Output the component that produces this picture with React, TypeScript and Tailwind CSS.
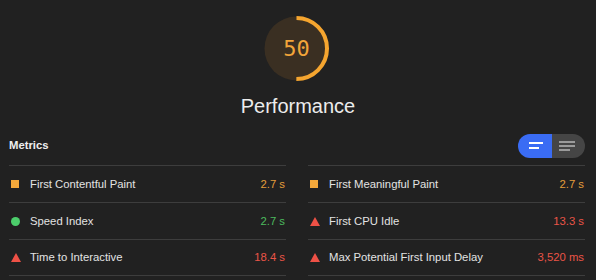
import { ReactNode } from "react"

type Tone = "average" | "pass" | "fail"

interface Metric {
  label: string
  value: string
  tone: Tone
}

const left: Metric[] = [
  { label: "First Contentful Paint", value: "2.7 s", tone: "average" },
  { label: "Speed Index", value: "2.7 s", tone: "pass" },
  { label: "Time to Interactive", value: "18.4 s", tone: "fail" },
]

const right: Metric[] = [
  { label: "First Meaningful Paint", value: "2.7 s", tone: "average" },
  { label: "First CPU Idle", value: "13.3 s", tone: "fail" },
  { label: "Max Potential First Input Delay", value: "3,520 ms", tone: "fail" },
]

const valueColor: Record<Tone, string> = {
  average: "text-[#e49d3b]",
  pass: "text-[#4cbb5e]",
  fail: "text-[#ea5447]",
}

function ToneIcon({ tone }: { tone: Tone }) {
  if (tone === "average") return <span className="block w-[8px] h-[8px] bg-[#f5a93b]" />
  if (tone === "pass") return <span className="block w-[9px] h-[9px] rounded-full bg-[#4ccd6b]" />
  return (
    <svg viewBox="0 0 10 9" width="10" height="9" className="block">
      <path d="M5 0 L10 9 L0 9 Z" fill="#ee5146" />
    </svg>
  )
}

function Gauge({ score }: { score: number }) {
  const r = 30.5
  const c = 2 * Math.PI * r
  return (
    <div className="relative w-[67px] h-[67px] mr-[3px]">
      <svg viewBox="0 0 67 67" width="67" height="67" className="block">
        <circle cx="33.5" cy="33.5" r="32" fill="#3a2f22" />
        <circle
          cx="33.5"
          cy="33.5"
          r={r}
          fill="none"
          stroke="#f5a52f"
          strokeWidth="4"
          strokeDasharray={`${(c * score) / 100} ${c}`}
          transform="rotate(-90 33.5 33.5)"
        />
      </svg>
      <div className="absolute inset-0 flex items-center justify-center font-['DejaVu_Sans_Mono',monospace] text-[22px] text-[#f2a53a]">
        {score}
      </div>
    </div>
  )
}

function Row({ m, last }: { m: Metric; last: boolean }): ReactNode {
  return (
    <div className={`flex items-center h-[37px] border-t border-[#3d3d3d] ${last ? "border-b" : ""}`}>
      <div className="w-[21px] pl-[2px] flex items-center">
        <ToneIcon tone={m.tone} />
      </div>
      <span className="flex-1 text-[#e3e3e3]">{m.label}</span>
      <span className={`pr-[1px] ${valueColor[m.tone]}`}>{m.value}</span>
    </div>
  )
}

export default function App() {
  return (
    <div className="w-[596px] h-[280px] bg-[#212121] overflow-hidden font-['Liberation_Sans',Arial,sans-serif] text-[11.3px]">
      <div className="flex flex-col items-center pt-[15px]">
        <Gauge score={50} />
        <div className="mt-[12px] text-[20px] leading-[24px] text-[#ececec]">Performance</div>
      </div>

      <div className="pl-[9px] pr-[11px] mt-[15px] flex items-center justify-between h-[25px]">
        <span className="font-bold text-[#eeeeee]">Metrics</span>
        <div className="flex h-[24px] rounded-full overflow-hidden">
          <div className="w-[34px] bg-[#3a6cf4] flex flex-col justify-center pl-[11px] gap-[3px]">
            <span className="block w-[14px] h-[2px] bg-white" />
            <span className="block w-[10px] h-[2px] bg-white" />
          </div>
          <div className="w-[33px] bg-[#454545] flex flex-col justify-center pl-[7px] gap-[2px]">
            <span className="block w-[16px] h-[2px] bg-[#9a9a9a]" />
            <span className="block w-[16px] h-[2px] bg-[#9a9a9a]" />
            <span className="block w-[11px] h-[2px] bg-[#9a9a9a]" />
          </div>
        </div>
      </div>

      <div className="mt-[7px] pl-[9px] pr-[11px] grid grid-cols-2 gap-x-[22px]">
        <div>
          {left.map((m, i) => (
            <Row key={m.label} m={m} last={i === left.length - 1} />
          ))}
        </div>
        <div>
          {right.map((m, i) => (
            <Row key={m.label} m={m} last={i === right.length - 1} />
          ))}
        </div>
      </div>
    </div>
  )
}
